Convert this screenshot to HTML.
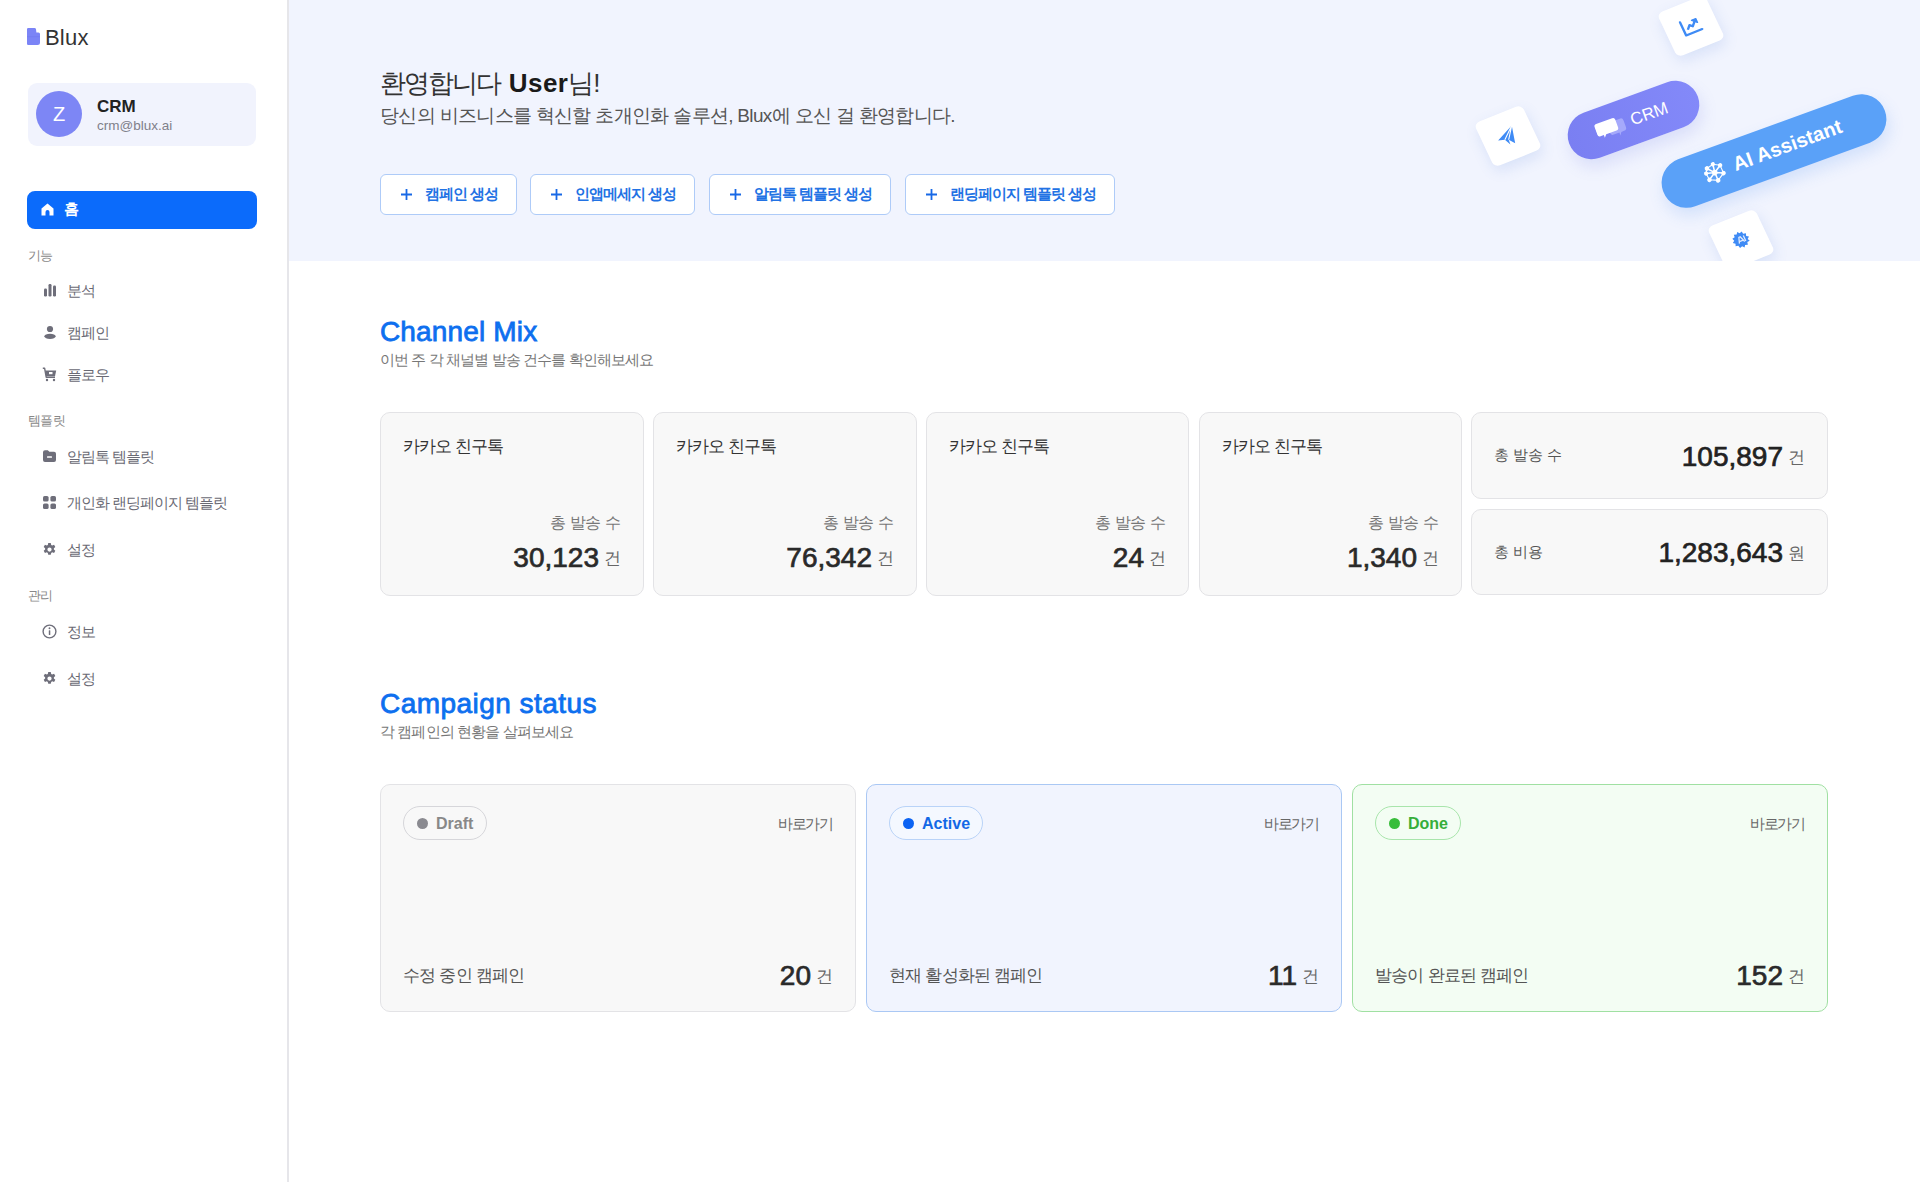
<!DOCTYPE html>
<html lang="ko">
<head>
<meta charset="utf-8">
<style>
*{box-sizing:border-box;margin:0;padding:0}
html,body{width:1920px;height:1182px;overflow:hidden;background:#fff;font-family:"Liberation Sans",sans-serif;color:#222}
.abs{position:absolute}
#side{position:absolute;left:0;top:0;width:289px;height:1182px;background:#fff;border-right:2px solid #e6e6ea}
.logo{position:absolute;left:27px;top:26px;height:22px}
.logo .mk{position:absolute;left:0;top:2px;width:13px;height:17px}
.logo .tx{position:absolute;left:18px;top:-1px;font-size:22px;color:#333;letter-spacing:0.2px}
.prof{position:absolute;left:28px;top:83px;width:228px;height:63px;background:#f1f3fd;border-radius:9px}
.av{position:absolute;left:8px;top:8px;width:46px;height:46px;border-radius:50%;background:#7d86f5;color:#fff;font-size:20px;text-align:center;line-height:46px}
.pn{position:absolute;left:69px;top:14px;font-size:17px;font-weight:bold;color:#222}
.pe{position:absolute;left:69px;top:35px;font-size:13.5px;color:#80808a}
.home{position:absolute;left:27px;top:191px;width:230px;height:38px;background:#0b6bfb;border-radius:8px;color:#fff;font-size:15px;font-weight:bold}
.sec{position:absolute;left:28px;font-size:13px;color:#888;letter-spacing:-0.6px}
.item{position:absolute;left:42px;height:20px;font-size:15px;color:#6a6a74;letter-spacing:-1px}
.item svg{position:absolute;left:0;top:3px}
.item span{position:absolute;left:25px;top:1px;white-space:nowrap}
#banner{position:absolute;left:289px;top:0;width:1631px;height:261px;background:#f1f4fe;overflow:hidden}
.h1{position:absolute;left:91px;top:66px;font-size:26px;color:#333;white-space:nowrap;letter-spacing:-0.9px}
.h1 b{font-weight:bold;color:#1a1a1a;letter-spacing:0.4px}
.sub{position:absolute;left:91px;top:103px;font-size:19px;color:#555;white-space:nowrap;letter-spacing:-0.68px}
.btn{position:absolute;top:174px;height:41px;background:#fff;border:1.5px solid #aecbf8;border-radius:6px;color:#2272e4;font-size:15px;font-weight:bold;white-space:nowrap}
.btn span{position:absolute;top:10px;letter-spacing:-1px}
.tile{position:absolute;width:52px;height:52px;background:#fff;border-radius:6px;transform:scaleY(0.92) rotate(-23.5deg);box-shadow:0 6px 14px rgba(90,130,220,0.16)}
.pill{position:absolute;border-radius:26px;transform:rotate(-20deg)}
.pill.crm{background:linear-gradient(90deg,#7a7ff2,#8389f9);box-shadow:0 8px 16px rgba(110,120,230,0.18)}
.pill.ai{background:#5aa1f8;box-shadow:0 8px 16px rgba(70,140,240,0.18)}
.title{position:absolute;left:380px;font-size:28px;font-weight:normal;-webkit-text-stroke:0.8px currentColor;color:#0d6fef;white-space:nowrap;letter-spacing:0px}
.stitle{position:absolute;left:380px;font-size:15px;color:#777;white-space:nowrap;letter-spacing:-0.9px}
.card{position:absolute;background:#f8f8f8;border:1.5px solid #e3e3e6;border-radius:10px}
.card .ct{position:absolute;left:22px;top:22px;font-size:17px;color:#333;white-space:nowrap;letter-spacing:-1px}
.card .cl{position:absolute;right:22px;top:100px;font-size:16px;color:#777;white-space:nowrap;letter-spacing:-0.3px}
.card .cn{position:absolute;right:22px;top:129px;white-space:nowrap;color:#2a2a2a}
.num{font-size:28px;font-weight:normal;-webkit-text-stroke:0.7px currentColor}
.unit{font-size:17px;color:#666;margin-left:5px;position:relative;top:-3px}
.scard{position:absolute;top:784px;width:476px;height:228px;border-radius:10px;border:1.5px solid #e3e3e6;background:#f8f8f8}
.badge{position:absolute;left:22px;top:21px;height:34px;border-radius:17px;border:1.5px solid #ccc;font-size:16px;font-weight:bold;white-space:nowrap}
.badge i{position:absolute;left:13px;top:10.5px;width:11px;height:11px;border-radius:50%}
.badge span{position:absolute;left:32px;top:8px}
.go{position:absolute;right:22px;top:30px;font-size:15px;color:#666;letter-spacing:-1.2px}
.bl{position:absolute;left:22px;top:179px;font-size:17px;color:#555;white-space:nowrap;letter-spacing:-0.8px}
.br{position:absolute;right:22px;top:175px;white-space:nowrap;color:#2a2a2a}
</style>
</head>
<body>
<div id="side">
  <div class="logo">
    <svg class="mk" viewBox="0 0 13 17"><path d="M0 1.2Q0 0 1.2 0H7.5Q8.8 0 9 1.2L9.4 4.5H11.5Q13 4.5 13 6V14.5Q13 17 10.5 17H1.2Q0 17 0 15.8Z" fill="#7b84f6"/><rect x="0" y="8" width="13" height="1.2" fill="#6f78ee" opacity="0.5"/></svg>
    <div class="tx">Blux</div>
  </div>
  <div class="prof">
    <div class="av">Z</div>
    <div class="pn">CRM</div>
    <div class="pe">crm@blux.ai</div>
  </div>
  <div class="home">
    <svg class="abs" style="left:14px;top:12px" width="13" height="13" viewBox="0 0 13 13"><path d="M6.5 0.5L12.5 5.5V12.5H8.5V9A2 2 0 0 0 4.5 9V12.5H0.5V5.5Z" fill="#fff"/></svg>
    <span class="abs" style="left:37px;top:9px">홈</span>
  </div>
  <div class="sec" style="top:247px">기능</div>
  <div class="item" style="top:281px"><svg width="14" height="14" viewBox="0 0 14 14" style="left:1px;top:2px"><rect x="1" y="5.5" width="3" height="8" rx="1.2" fill="#6e6e7a"/><rect x="5.5" y="1" width="3" height="12.5" rx="1.2" fill="#6e6e7a"/><rect x="10" y="2.5" width="3" height="11" rx="1.2" fill="#6e6e7a"/></svg><span>분석</span></div>
  <div class="item" style="top:323px"><svg width="14" height="14" viewBox="0 0 14 14" style="left:1px;top:2px"><circle cx="7" cy="4" r="3.1" fill="#6e6e7a"/><ellipse cx="7" cy="11.3" rx="5.6" ry="2.6" fill="#6e6e7a"/></svg><span>캠페인</span></div>
  <div class="item" style="top:365px"><svg width="15" height="15" viewBox="0 0 15 15" style="left:0;top:2px"><path d="M0.8 1.2H2.6L4.2 10.2H13" fill="none" stroke="#6e6e7a" stroke-width="1.4" stroke-linejoin="round"/><path d="M3.3 3.5H14.2L13 9.2H4.1Z" fill="#6e6e7a"/><rect x="7" y="5" width="3.5" height="2.2" fill="#fff"/><circle cx="5" cy="13" r="1.2" fill="#6e6e7a"/><circle cx="12" cy="13" r="1.2" fill="#6e6e7a"/></svg><span>플로우</span></div>
  <div class="sec" style="top:412px">템플릿</div>
  <div class="item" style="top:447px"><svg width="15" height="14" viewBox="0 0 15 14" style="left:0;top:2px"><path d="M1 3.2Q1 1.2 3 1.2H5.8L7.4 2.8H12Q14 2.8 14 4.8V11Q14 13 12 13H3Q1 13 1 11Z" fill="#6e6e7a"/><rect x="5" y="7.2" width="5" height="1.5" rx="0.5" fill="#fff"/></svg><span>알림톡 템플릿</span></div>
  <div class="item" style="top:493px"><svg width="15" height="15" viewBox="0 0 15 15" style="left:0;top:2px"><rect x="1" y="1" width="5.6" height="5.6" rx="1.6" fill="#6e6e7a"/><rect x="8.4" y="1" width="5.6" height="5.6" rx="1.6" fill="#6e6e7a"/><rect x="1" y="8.4" width="5.6" height="5.6" rx="1.6" fill="#6e6e7a"/><rect x="8.4" y="8.4" width="5.6" height="5.6" rx="1.6" fill="#6e6e7a"/></svg><span>개인화 랜딩페이지 템플릿</span></div>
  <div class="item" style="top:540px"><svg width="15" height="15" viewBox="0 0 24 24" style="left:0;top:2px"><path fill="#6e6e7a" fill-rule="evenodd" d="M10 1.5h4l.7 3.1 1.6.9 3-1 2 3.5-2.3 2.1v1.8l2.3 2.1-2 3.5-3-1-1.6.9-.7 3.1h-4l-.7-3.1-1.6-.9-3 1-2-3.5 2.3-2.1v-1.8L2.7 8l2-3.5 3 1 1.6-.9ZM12 8.6a3.4 3.4 0 1 0 0 6.8 3.4 3.4 0 0 0 0-6.8Z"/></svg><span>설정</span></div>
  <div class="sec" style="top:587px">관리</div>
  <div class="item" style="top:622px"><svg width="15" height="15" viewBox="0 0 15 15" style="left:0;top:2px"><circle cx="7.5" cy="7.5" r="6.4" fill="none" stroke="#6e6e7a" stroke-width="1.4"/><rect x="6.8" y="6.3" width="1.5" height="4.7" rx="0.5" fill="#6e6e7a"/><circle cx="7.5" cy="4.3" r="0.95" fill="#6e6e7a"/></svg><span>정보</span></div>
  <div class="item" style="top:669px"><svg width="15" height="15" viewBox="0 0 24 24" style="left:0;top:2px"><path fill="#6e6e7a" fill-rule="evenodd" d="M10 1.5h4l.7 3.1 1.6.9 3-1 2 3.5-2.3 2.1v1.8l2.3 2.1-2 3.5-3-1-1.6.9-.7 3.1h-4l-.7-3.1-1.6-.9-3 1-2-3.5 2.3-2.1v-1.8L2.7 8l2-3.5 3 1 1.6-.9ZM12 8.6a3.4 3.4 0 1 0 0 6.8 3.4 3.4 0 0 0 0-6.8Z"/></svg><span>설정</span></div>
</div>

<div id="banner">
  <div class="h1"><span style="letter-spacing:-2.1px;margin-right:3px">환영합니다</span> <b>User</b>님!</div>
  <div class="sub">당신의 비즈니스를 혁신할 초개인화 솔루션, Blux에 오신 걸 환영합니다.</div>
  <div class="btn" style="left:91px;width:137px"><svg class="abs" style="left:20px;top:14px" width="11" height="11" viewBox="0 0 11 11"><path d="M5.5 0V11M0 5.5H11" stroke="#1768e6" stroke-width="1.8"/></svg><span style="left:44px">캠페인 생성</span></div>
  <div class="btn" style="left:241px;width:165px"><svg class="abs" style="left:20px;top:14px" width="11" height="11" viewBox="0 0 11 11"><path d="M5.5 0V11M0 5.5H11" stroke="#1768e6" stroke-width="1.8"/></svg><span style="left:44px">인앱메세지 생성</span></div>
  <div class="btn" style="left:420px;width:182px"><svg class="abs" style="left:20px;top:14px" width="11" height="11" viewBox="0 0 11 11"><path d="M5.5 0V11M0 5.5H11" stroke="#1768e6" stroke-width="1.8"/></svg><span style="left:44px">알림톡 템플릿 생성</span></div>
  <div class="btn" style="left:616px;width:210px"><svg class="abs" style="left:20px;top:14px" width="11" height="11" viewBox="0 0 11 11"><path d="M5.5 0V11M0 5.5H11" stroke="#1768e6" stroke-width="1.8"/></svg><span style="left:44px">랜딩페이지 템플릿 생성</span></div>
  <div class="tile" style="left:1376px;top:-0.4px"><svg class="abs" style="left:14px;top:14px" width="24" height="24" viewBox="0 0 24 24"><path d="M3.5 4V19.5H21" fill="none" stroke="#3f8bf5" stroke-width="2.4" stroke-linecap="round" stroke-linejoin="round"/><path d="M7.5 14.5L11 10.5L13.5 13L17.5 8.5" fill="none" stroke="#3f8bf5" stroke-width="2.4" stroke-linejoin="round"/><path d="M15 6.5H19.5V11Z" fill="#3f8bf5" stroke="#3f8bf5" stroke-width="1.5" stroke-linejoin="round"/></svg></div>
  <div class="tile" style="left:1192.7px;top:109.7px"><svg class="abs" style="left:12px;top:13px" width="26" height="26" viewBox="0 0 26 26"><path d="M3 13.5L22 4L17.5 23L13 17L12.5 22.5L9.5 15.5Z" fill="#3f8bf5"/><path d="M9.5 15.5L22 4L13 17" fill="none" stroke="#fff" stroke-width="1.1" stroke-linejoin="round"/></svg></div>
  <div class="tile" style="left:1426px;top:213.5px"><svg class="abs" style="left:15px;top:15px" width="22" height="22" viewBox="0 0 22 22"><path d="M11 1.5L12.6 3.8L15.3 2.9L15.6 5.7L18.4 6.3L17.5 9L19.8 10.8L17.6 12.6L18.7 15.2L15.9 15.6L15.3 18.4L12.6 17.6L11 20L9.4 17.6L6.7 18.5L6.1 15.7L3.3 15.2L4.4 12.5L2.2 10.8L4.5 9L3.6 6.3L6.4 5.7L6.7 2.9L9.4 3.8Z" fill="#3f8bf5"/><path d="M8 14L10.2 7.5H11.6L13.8 14M8.8 12H13" fill="none" stroke="#dfeafd" stroke-width="1.3"/><path d="M15 7.5V14" stroke="#dfeafd" stroke-width="1.3"/></svg></div>
  <div class="pill crm" style="left:1275.5px;top:95.5px;width:137px;height:48px">
    <svg class="abs" style="left:29px;top:11px" width="32" height="26" viewBox="0 0 32 26"><path d="M13 7H27Q30 7 30 10V17Q30 20 27 20H24L22 23V20H16Q13 20 13 17Z" fill="#a5a9fb"/><path d="M3 4H20Q22.5 4 22.5 6.5V14.5Q22.5 17 20 17H9L6.5 20V17H3Q0.5 17 0.5 14.5V6.5Q0.5 4 3 4Z" fill="#fff"/></svg>
    <span class="abs" style="left:66px;top:14px;font-size:17px;color:#fff">CRM</span>
  </div>
  <div class="pill ai" style="left:1367px;top:126px;width:236px;height:50px">
    <svg class="abs" style="left:43px;top:13px" width="24" height="24" viewBox="0 0 24 24"><g stroke="#fff" stroke-width="1.5" fill="none"><path d="M12 12L6 5.5M12 12L13 3.5M12 12L19.5 7M12 12L20 15.5M12 12L12.5 20.5M12 12L4.5 17M12 12L3.5 10"/><path d="M6 5.5L13 3.5L19.5 7L20 15.5L12.5 20.5L4.5 17L3.5 10Z" stroke-width="1.1"/></g><g fill="#fff"><circle cx="12" cy="12" r="2.8"/><circle cx="6" cy="5.5" r="2.3"/><circle cx="13" cy="3.5" r="2.1"/><circle cx="19.5" cy="7" r="2.2"/><circle cx="20" cy="15.5" r="2.3"/><circle cx="12.5" cy="20.5" r="2.3"/><circle cx="4.5" cy="17" r="2.3"/><circle cx="3.5" cy="10" r="2.1"/></g></svg>
    <span class="abs" style="left:75px;top:13px;font-size:20px;font-weight:bold;color:#fff;white-space:nowrap">AI Assistant</span>
  </div>
</div>

<div class="title" style="top:316px;letter-spacing:0.15px">Channel Mix</div>
<div class="stitle" style="top:351px">이번 주 각 채널별 발송 건수를 확인해보세요</div>

<div class="card" style="left:380px;top:412px;width:264px;height:184px"><div class="ct">카카오 친구톡</div><div class="cl">총 발송 수</div><div class="cn"><span class="num">30,123</span><span class="unit">건</span></div></div>
<div class="card" style="left:653px;top:412px;width:264px;height:184px"><div class="ct">카카오 친구톡</div><div class="cl">총 발송 수</div><div class="cn"><span class="num">76,342</span><span class="unit">건</span></div></div>
<div class="card" style="left:926px;top:412px;width:263px;height:184px"><div class="ct">카카오 친구톡</div><div class="cl">총 발송 수</div><div class="cn"><span class="num">24</span><span class="unit">건</span></div></div>
<div class="card" style="left:1199px;top:412px;width:263px;height:184px"><div class="ct">카카오 친구톡</div><div class="cl">총 발송 수</div><div class="cn"><span class="num">1,340</span><span class="unit">건</span></div></div>
<div class="card" style="left:1471px;top:412px;width:357px;height:87px"><div class="abs" style="left:22px;top:33px;font-size:15px;color:#555">총 발송 수</div><div class="abs" style="right:22px;top:28px;white-space:nowrap"><span class="num">105,897</span><span class="unit">건</span></div></div>
<div class="card" style="left:1471px;top:509px;width:357px;height:86px"><div class="abs" style="left:22px;top:33px;font-size:15px;color:#555">총 비용</div><div class="abs" style="right:22px;top:27px;white-space:nowrap"><span class="num">1,283,643</span><span class="unit">원</span></div></div>

<div class="title" style="top:688px;letter-spacing:0.45px">Campaign status</div>
<div class="stitle" style="top:723px">각 캠페인의 현황을 살펴보세요</div>

<div class="scard" style="left:380px">
  <div class="badge" style="width:84px;border-color:#d6d6da;color:#888"><i style="background:#8a8a90"></i><span>Draft</span></div>
  <div class="go">바로가기</div>
  <div class="bl">수정 중인 캠페인</div>
  <div class="br"><span class="num">20</span><span class="unit">건</span></div>
</div>
<div class="scard" style="left:866px;background:#f1f4fe;border-color:#aac8f4">
  <div class="badge" style="width:94px;border-color:#b9d3f8;color:#1368e6;background:#f4f8ff"><i style="background:#0b63f3"></i><span>Active</span></div>
  <div class="go">바로가기</div>
  <div class="bl">현재 활성화된 캠페인</div>
  <div class="br"><span class="num">11</span><span class="unit">건</span></div>
</div>
<div class="scard" style="left:1352px;background:#f3fdf3;border-color:#a0e0a2">
  <div class="badge" style="width:86px;border-color:#a8e5ab;color:#36ae3a;background:#f3fdf3"><i style="background:#38bd3a"></i><span>Done</span></div>
  <div class="go">바로가기</div>
  <div class="bl">발송이 완료된 캠페인</div>
  <div class="br"><span class="num">152</span><span class="unit">건</span></div>
</div>
</body>
</html>
